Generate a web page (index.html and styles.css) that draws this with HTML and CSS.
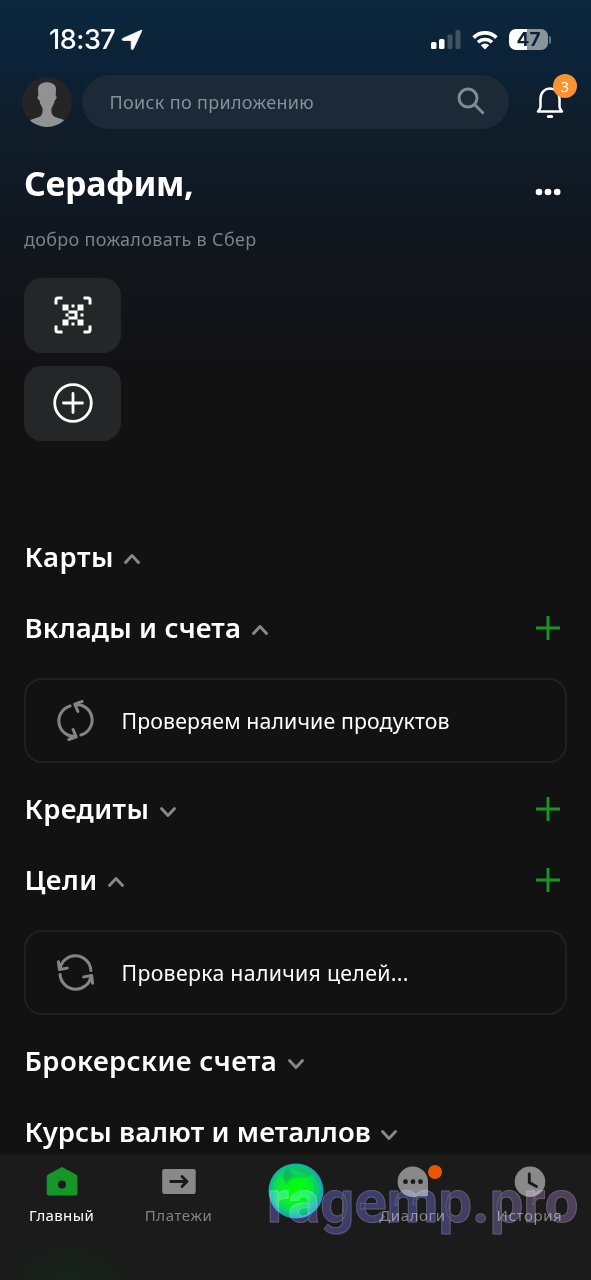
FILE: index.html
```html
<!DOCTYPE html>
<html lang="ru">
<head>
<meta charset="utf-8">
<title>Сбер</title>
<link rel="stylesheet" href="styles.css">
</head>
<body>
<div class="app">
  <header class="status">
    <div class="clock"><span class="time">18:37</span>
      <svg width="22" height="22" viewBox="0 0 22 22"><path d="M20.2 1.2 1.8 9.400c-1.100.5-.8 2 .4 2l8 .1.1 8c0 1.300 1.600 1.500 2.100.4L20.800 1.800c.2-.5-.1-.8-.6-.6z" fill="#fff" stroke="#fff" stroke-width=".8"/></svg>
    </div>
    <div class="indicators">
      <svg width="30" height="20" viewBox="0 0 30 20"><rect x="0" y="12" width="5.500" height="7" rx="1.500" fill="#fff"/><rect x="8" y="9" width="5.500" height="10" rx="1.500" fill="#fff"/><rect x="16.500" y="4.500" width="5" height="14.500" rx="1.500" fill="#42525f"/><rect x="24.500" y="0" width="5" height="19" rx="1.500" fill="#42525f"/></svg>
      <svg class="wifi" width="26" height="20" viewBox="0 0 26 20"><g fill="none" stroke="#fff" stroke-width="3.600"><path d="M1.600 7.600a16.200 16.200 0 0 1 22.800 0"/><path d="M6 12.300a10 10 0 0 1 14 0"/></g><path d="M8.800 15.200a6 6 0 0 1 8.400 0L13 19.500z" fill="#fff"/></svg>
      <div class="battery"><span>47</span></div><i class="battery-cap"></i>
    </div>
  </header>

  <div class="topbar">
    <svg class="avatar" width="50" height="50" viewBox="0 0 50 50"><defs><clipPath id="face"><circle cx="25" cy="25" r="25"/></clipPath></defs><circle cx="25" cy="25" r="25" fill="#252525"/><path clip-path="url(#face)" d="M16 12c0-9 18-9 18 0l-.3 7c1.500 0 1 4-.9 4-.5 4-2.300 6-3.300 8-.6 9 2 8.600 14 12.300L40 50H10l-3-6.700c12-3.700 14-3.300 13.500-12.300-1-2-2.600-4-3.200-8-2-.3-2.300-4-1-4z" fill="#929292"/></svg>
    <div class="search"><span>Поиск по приложению</span>
      <svg width="28" height="28" viewBox="0 0 28 28" fill="none" stroke="#7f8a91" stroke-width="3" stroke-linecap="round"><circle cx="11" cy="11" r="9"/><path d="m17.800 17.800 8 8"/></svg>
    </div>
    <div class="bell">
      <svg width="28" height="32" viewBox="0 0 28 32" fill="none" stroke="#fff" stroke-linejoin="round"><path stroke-width="2.500" d="M4.500 12C4.500-2 23.500-2 23.500 12v7.500c0 2.200 1.300 3.200 2.500 5H2c1.200-1.800 2.500-2.800 2.500-5z"/><path stroke-width="3" stroke-linecap="round" d="M12.300 29.500h3.400"/></svg>
      <span class="badge">3</span>
    </div>
  </div>

  <section class="greeting">
    <h1>Серафим,</h1>
    <svg width="26" height="8" viewBox="0 0 26 8" fill="#fff"><circle cx="4" cy="4" r="3.300"/><circle cx="13" cy="4" r="3.300"/><circle cx="22.200" cy="4" r="3.300"/></svg>
  </section>
  <p class="welcome">добро пожаловать в Сбер</p>

  <div class="actions">
    <div class="tile"><svg width="38" height="38" viewBox="0 0 38 38"><g fill="none" stroke="#fff" stroke-width="3"><path d="M2 8.500V4q0-2 2-2h4.500M29.500 2H34q2 0 2 2v4.500M36 29.500V34q0 2-2 2h-4.500M8.500 36H4q-2 0-2-2v-4.500"/></g><path fill="#fff" d="M8.500 8.500h6v6h-6zM23.500 8.500h6v6h-6zM8.500 23.500h6v6h-6zM23.500 23.500h6v6h-6zM17.500 8.500h3v3h-3zM17.500 26.500h3v3h-3zM11.500 17.500h3v3h-3zM26.500 17.500h3v3h-3zM14.500 14.500h9v9h-9v-3h6v-3h-6z"/></svg></div>
    <div class="tile"><svg width="40" height="40" viewBox="0 0 40 40" fill="none" stroke="#fff" stroke-width="2.800" stroke-linecap="round"><circle cx="20" cy="20" r="18.300"/><path d="M20 10.500v19M10.500 20h19"/></svg></div>
  </div>

  <main class="sections">
    <div class="row first"><h2 class="t-cards">Карты</h2><svg class="chev" viewBox="0 0 16 10"><path d="m1.500 8.500 6.500-7 6.500 7"/></svg></div>
    <div class="row"><h2 class="t-deposits">Вклады и счета</h2><svg class="chev" viewBox="0 0 16 10"><path d="m1.500 8.500 6.500-7 6.500 7"/></svg><svg class="plus" viewBox="0 0 26 26"><path d="M13 1v24M1 13h24"/></svg></div>
    <div class="card">
      <svg class="sync" viewBox="0 0 40 40"><g transform="rotate(77 20 20)"><path d="M4 16.500A16 16 0 0 1 35.800 18M2.500 9l1 8 8-1.500M36 23.500A16 16 0 0 1 4.200 22M37.500 31l-1-8-8 1.500"/></g></svg>
      <span class="c-products">Проверяем наличие продуктов</span>
    </div>
    <div class="row"><h2 class="t-credits">Кредиты</h2><svg class="chev down" viewBox="0 0 16 10"><path d="m1.500 1.500 6.500 7 6.500-7"/></svg><svg class="plus" viewBox="0 0 26 26"><path d="M13 1v24M1 13h24"/></svg></div>
    <div class="row"><h2 class="t-goals">Цели</h2><svg class="chev" viewBox="0 0 16 10"><path d="m1.500 8.500 6.500-7 6.500 7"/></svg><svg class="plus" viewBox="0 0 26 26"><path d="M13 1v24M1 13h24"/></svg></div>
    <div class="card">
      <svg class="sync" viewBox="0 0 40 40"><path d="M4 16.500A16 16 0 0 1 35.800 18M2.500 9l1 8 8-1.500M36 23.500A16 16 0 0 1 4.200 22M37.500 31l-1-8-8 1.500"/></svg>
      <span class="c-goals">Проверка наличия целей...</span>
    </div>
    <div class="row"><h2 class="t-broker">Брокерские счета</h2><svg class="chev down" viewBox="0 0 16 10"><path d="m1.500 1.500 6.500 7 6.500-7"/></svg></div>
    <div class="row"><h2 class="t-rates">Курсы валют и металлов</h2><svg class="chev down" viewBox="0 0 16 10"><path d="m1.500 1.500 6.500 7 6.500-7"/></svg></div>
  </main>

  <nav class="tabs">
    <div class="tab active"><svg width="36" height="36" viewBox="0 0 36 36"><path d="M17 3.400q1-.6 2 0l13 7q1.300.8 1.300 2v17.300q0 1.700-1.700 1.700H4.400q-1.700 0-1.700-1.700V12.400q0-1.200 1.300-2z" fill="#169529"/><circle cx="18" cy="20.500" r="4" fill="#1b1b1b"/></svg><span>Главный</span></div>
    <div class="tab"><svg width="36" height="36" viewBox="0 0 36 36"><rect x="1.200" y="5" width="33.500" height="25" rx="2.300" fill="#898989"/><path d="M9.800 17.500H26M21 12.500l5 5-5 5" fill="none" stroke="#1a1a1a" stroke-width="2.900" stroke-linecap="round" stroke-linejoin="round"/></svg><span>Платежи</span></div>
    <div class="tab orb-tab">
      <svg width="56" height="56" viewBox="0 0 56 56"><defs><radialGradient id="orb" cx=".48" cy=".48" r=".54"><stop offset="0" stop-color="#00ff08"/><stop offset=".45" stop-color="#05f520"/><stop offset=".72" stop-color="#09d860"/><stop offset=".9" stop-color="#18a5b4"/><stop offset="1" stop-color="#2b8fc8"/></radialGradient><filter id="soft" x="-20%" y="-20%" width="140%" height="140%"><feGaussianBlur stdDeviation="1"/></filter></defs><circle cx="28" cy="28" r="27.500" fill="url(#orb)"/><g filter="url(#soft)"><path d="M17 7q-5 6 2 15 1-8 10-8 9 1 14-3-7-6-15-6-7 0-11 2z" fill="#0fae62" opacity=".8"/><path d="M21 7q3 6 12 6 5 0 7-3-10-1-13-4z" fill="#0fd85c"/><path d="M12 14Q3 28 15 42q-5-15 1-24z" fill="#12e936" opacity=".7"/><path d="M44 14q6 10 1 19-6 11-18 13 13 2 19-9 6-13-2-23z" fill="#10b663" opacity=".6"/></g></svg>
    </div>
    <div class="tab"><svg width="36" height="36" viewBox="0 0 36 36"><path d="M18 2.500A15.300 15.300 0 1 0 23 32.200h8.500q1.500 0 1.500-1.500V17.800A15.300 15.300 0 0 0 18 2.500z" fill="#898989"/><g fill="#1a1a1a"><circle cx="10.500" cy="17.700" r="2.400"/><circle cx="18" cy="17.700" r="2.400"/><circle cx="25.500" cy="17.700" r="2.400"/></g></svg><i class="dot"></i><span>Диалоги</span></div>
    <div class="tab"><svg width="36" height="36" viewBox="0 0 36 36"><circle cx="18" cy="17.700" r="15.300" fill="#898989"/><path d="M17.300 10v8.500l7.200 4" fill="none" stroke="#1a1a1a" stroke-width="2.900" stroke-linecap="round" stroke-linejoin="round"/></svg><span>История</span></div>
  </nav>
  <div class="watermark">ragemp.pro</div>
</div>
</body>
</html>
```
FILE: styles.css
```css
* { box-sizing: border-box; }
body { margin: 0; background: #121212; font-family: "Noto Sans", sans-serif; color: #fff; }
svg { display: block; flex: none; overflow: visible; }
h1, h2, p { margin: 0; }
.app {
  position: relative; width: 591px; height: 1280px; overflow: hidden;
  display: flex; flex-direction: column;
  background: linear-gradient(#0c283e 0, #0b2238 65px, #0f1e2c 110px, #101923 190px, #12151b 270px, #121214 370px, #121212 450px);
}
.status { height: 75px; padding: 4px 40px 0 49px; display: flex; justify-content: space-between; align-items: center; }
.clock, .indicators { display: flex; align-items: center; }
.clock { gap: 6px; }
.time { font: 500 27px/32px Inter, sans-serif; letter-spacing: -0.5px; padding-top: 1px; }
.wifi { margin: 0 11px 0 11px; }
.battery { width: 39px; height: 21px; border-radius: 7px; background: linear-gradient(90deg, #fff 47%, #89949c 47%); text-align: center; font: 700 19px/21px Inter, sans-serif; color: #0b2237; }
.battery-cap { width: 2px; height: 8px; margin-left: 1px; border-radius: 0 3px 3px 0; background: #66737e; }

.topbar { height: 54px; padding: 0 26px 0 22px; display: flex; align-items: center; }
.search { width: 427px; height: 54px; margin-left: 10px; padding: 0 24px 2px 27.5px; border-radius: 27px; background: #1b2a36; display: flex; align-items: center; justify-content: space-between; color: #84919a; font-size: 18px; letter-spacing: .33px; }
.search span { padding-top: 2px; }
.bell { position: relative; margin: 0 0 0 27px; padding-top: 2px; }
.badge { position: absolute; left: 17px; top: -11px; width: 24px; height: 24px; border-radius: 50%; background: #fa9334; font-size: 14.500px; line-height: 24px; text-align: center; }

.greeting { height: 48px; margin-top: 30px; padding: 0 30px 0 24px; display: flex; justify-content: space-between; align-items: center; }
.greeting h1 { font-size: 34px; line-height: 48px; font-weight: 700; letter-spacing: -0.35px; }
.greeting svg { margin-top: 18px; }
.welcome { margin: 20px 0 0 24px; font-size: 18px; line-height: 24px; letter-spacing: .31px; color: #7d8188; }
.actions { margin: 26.5px 0 0 24px; display: flex; flex-direction: column; gap: 12.5px; }
.tile { width: 97px; height: 75.5px; border-radius: 18px; background: #242628; display: flex; align-items: center; justify-content: center; }

.sections { margin-top: 96px; padding: 0 24px; }
.row { height: 40px; margin-bottom: 31.5px; display: flex; align-items: center; }
.row.first { margin-bottom: 31px; }
.row h2 { font-size: 27.5px; line-height: 40px; font-weight: 600; white-space: nowrap; padding-left: .5px; }
.t-cards { letter-spacing: .5px; }
.t-deposits { letter-spacing: .12px; }
.t-credits { letter-spacing: .37px; }
.t-goals { letter-spacing: .4px; }
.t-broker { letter-spacing: .36px; }
.t-rates { letter-spacing: .08px; }
.chev { width: 16px; height: 10px; margin: 4px 0 0 10.5px; fill: none; stroke: #898989; stroke-width: 2.9; stroke-linecap: round; stroke-linejoin: round; }
.chev.down { margin-top: 6px; }
.plus { width: 26px; height: 26px; margin: 0 6px 0 auto; fill: none; stroke: #169629; stroke-width: 2.9; }
.row + .card { margin-top: -1.5px; }
.card { height: 84.5px; margin-bottom: 26px; border: 2px solid #212121; border-radius: 18px; padding-left: 30px; display: flex; align-items: center; gap: 26px; font-size: 21.300px; }
.card span { margin-left: -.5px; padding-top: 1px; }
.c-products { letter-spacing: .12px; }
.c-goals { letter-spacing: .3px; }
.sync { width: 39px; height: 39px; margin-right: 1px; fill: none; stroke: #848484; stroke-width: 3.100; stroke-linecap: round; stroke-linejoin: round; }

.tabs { position: absolute; left: 0; right: 0; bottom: 0; height: 126px; padding: 9px 3px 0; background: radial-gradient(ellipse 60px 40px at 70px 126px, #14241a, transparent), #1b1b1b; display: grid; grid-template-columns: repeat(5, 1fr); }
.tab { position: relative; display: flex; flex-direction: column; align-items: center; color: #828282; font-size: 15px; line-height: 20px; letter-spacing: .6px; }
.tab svg { height: 36px; margin-top: 1px; }
.tab span { margin-top: 5px; }
.tab.active { color: #fff; letter-spacing: .35px; }
.tab.orb-tab svg { height: 56px; margin-top: 0; }
.dot { position: absolute; left: 74px; top: 2px; width: 14px; height: 14px; border-radius: 50%; background: #eb5500; }
.watermark { position: absolute; left: 267px; top: 1162px; font-family: Roboto, sans-serif; font-size: 59.5px; line-height: 80px; font-weight: 700; letter-spacing: .25px; color: transparent; background: linear-gradient(90deg, #26265a 0, #26265a 50%, #362b46 85%); -webkit-background-clip: text; background-clip: text; mix-blend-mode: screen; -webkit-text-stroke: 1px rgba(120, 115, 105, .45); white-space: nowrap; }
```
